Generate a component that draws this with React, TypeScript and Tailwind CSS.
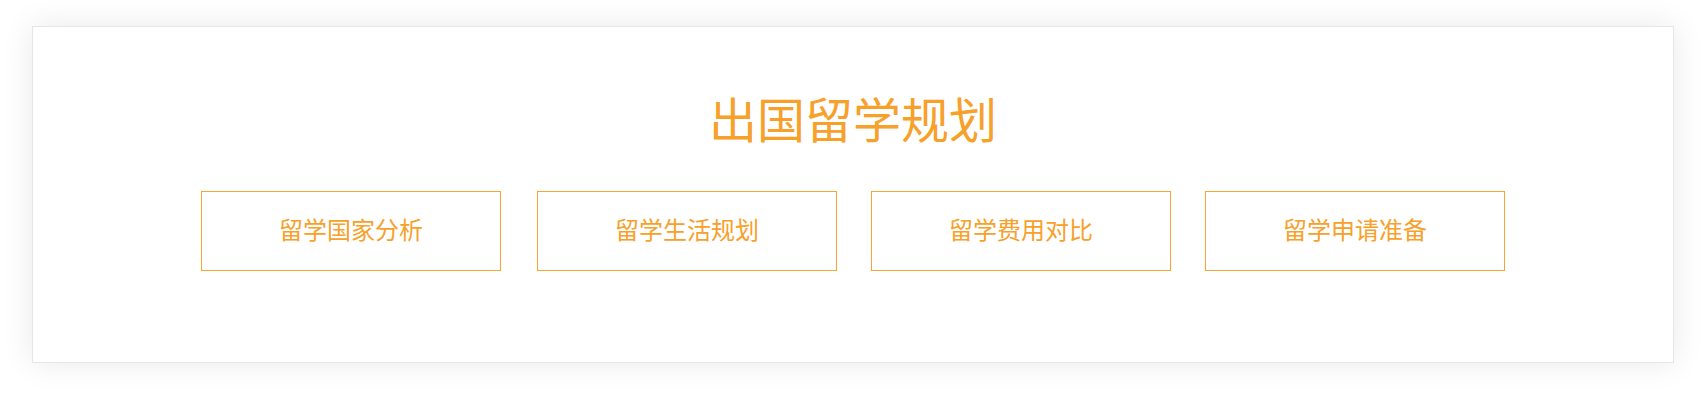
const items = [
  { id: "1", label: "留学国家分析", gap: "" },
  { id: "2", label: "留学生活规划", gap: "ml-[36px]" },
  { id: "3", label: "留学费用对比", gap: "ml-[34px]" },
  { id: "4", label: "留学申请准备", gap: "ml-[34px]" },
];

const App = () => {
  return (
    <div
      className="w-[1706px] h-[400px] bg-white px-[32px] pt-[26px]"
      style={{ fontFamily: '"Noto Sans CJK SC", "Noto Sans", sans-serif' }}
    >
      <section className="h-[337px] border border-[#e6e6e6] bg-white shadow-[0_0_30px_rgba(0,0,0,0.09)] flex flex-col items-center pt-[66px]">
        <h2 className="text-[48px] leading-[48px] text-[#f7a02a] font-normal">
          出国留学规划
        </h2>
        <ul className="flex mt-[50px]">
          {items.map((item) => (
            <li
              key={item.id}
              className={`${item.gap} w-[300px] h-[80px] border border-[#f8a534] flex items-center justify-center pb-[4px] text-[24px] text-[#f7a02a]`}
            >
              {item.label}
            </li>
          ))}
        </ul>
      </section>
    </div>
  );
};

export default App;
